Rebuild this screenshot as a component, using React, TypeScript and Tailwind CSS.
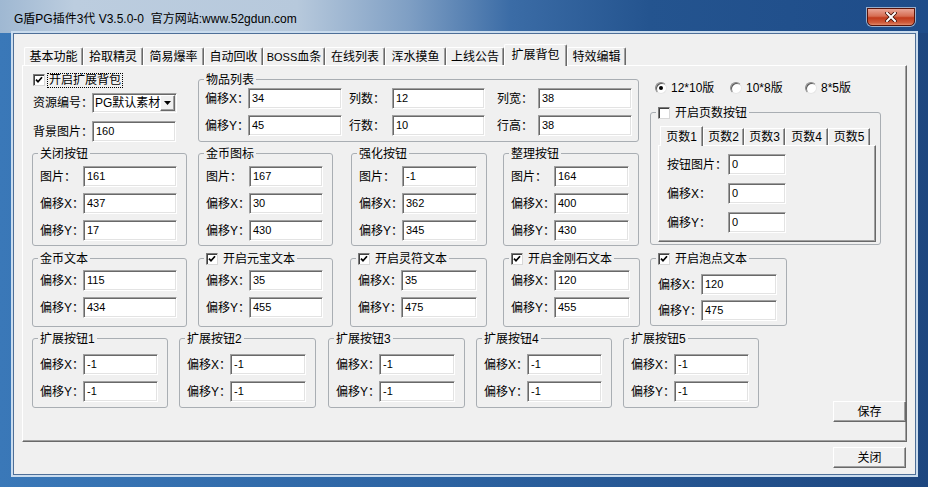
import React from 'react';

const sunken =
  'bg-white border border-t-[#a0a0a0] border-l-[#a0a0a0] border-r-white border-b-white shadow-[inset_1px_1px_0_#696969,inset_-1px_-1px_0_#e3e3e3]';
const raised =
  'bg-[#f0f0f0] border border-t-white border-l-white border-r-[#696969] border-b-[#696969] shadow-[inset_-1px_-1px_0_#a0a0a0]';

const Edit = ({ v, className = '' }: { v: string; className?: string }) => (
  <div className={`h-[21px] shrink-0 pl-[3px] pt-[3px] text-[11px] leading-[13px] ${sunken} ${className}`}>{v}</div>
);

const Check = ({ on = true }: { on?: boolean }) => (
  <span className="flex h-[12px] w-[12px] shrink-0 items-center justify-center border border-t-[#7a7a7a] border-l-[#7a7a7a] border-r-[#d8d8d8] border-b-[#d8d8d8] bg-white shadow-[inset_1px_1px_0_#404040]">
    {on && (
      <svg width="8" height="8" viewBox="0 0 8 8">
        <path d="M1 3.6 L3 5.8 L7 1.2" stroke="#000" strokeWidth="1.7" fill="none" />
      </svg>
    )}
  </span>
);

const Radio = ({ on = false }: { on?: boolean }) => (
  <span className="flex h-[12px] w-[12px] shrink-0 items-center justify-center rounded-full border border-t-[#8a8a8a] border-l-[#8a8a8a] border-r-[#e6e6e6] border-b-[#e6e6e6] bg-white shadow-[inset_1px_1px_0_#5a5a5a]">
    {on && <span className="h-[4px] w-[4px] rounded-full bg-black" />}
  </span>
);

const Group = ({
  title,
  className = '',
  children,
}: {
  title: React.ReactNode;
  className?: string;
  children?: React.ReactNode;
}) => (
  <div className={`relative shrink-0 rounded-[3px] border border-[#a9aeb3] ${className}`}>
    <div className="absolute -top-[8px] left-[5px] flex h-[15px] items-center gap-[5px] whitespace-nowrap bg-[#f0f0f0] px-[2px]">
      {title}
    </div>
    {children}
  </div>
);

const CheckTitle = ({ label, on = true }: { label: string; on?: boolean }) => (
  <>
    <Check on={on} />
    <span>{label}</span>
  </>
);

// label + edit pairs stacked inside a group
const Fields = ({ rows, className }: { rows: [string, string][]; className: string }) => (
  <div className={`flex flex-col pl-[7px] pr-[9px] ${className}`}>
    {rows.map(([label, v]) => (
      <div key={label} className="flex items-center">
        <span className="w-[43px] shrink-0 whitespace-nowrap">{label}</span>
        <Edit v={v} className="min-w-0 flex-1" />
      </div>
    ))}
  </div>
);

const TABS: [string, string][] = [
  ['基本功能', 'w-[59px]'],
  ['拾取精灵', 'w-[60px]'],
  ['简易爆率', 'w-[61px]'],
  ['自动回收', 'w-[59px]'],
  ['BOSS血条', 'w-[62px]'],
  ['在线列表', 'w-[60px]'],
  ['浑水摸鱼', 'w-[61px]'],
  ['上线公告', 'w-[58px]'],
  ['扩展背包', 'w-[63px]'],
  ['特效编辑', 'w-[59px]'],
];

const PAGE_TABS: [string, string][] = [
  ['页数1', 'w-[43px]'],
  ['页数2', 'w-[41px]'],
  ['页数3', 'w-[41px]'],
  ['页数4', 'w-[43px]'],
  ['页数5', 'w-[42px]'],
];

const XY = (x: string, y: string): [string, string][] => [
  ['偏移X：', x],
  ['偏移Y：', y],
];

export default function App() {
  return (
    <div className="relative flex h-[487px] w-[928px] flex-col overflow-hidden bg-[linear-gradient(90deg,#3a78b8_0%,#2d64a3_45%,#1d467f_100%)] font-['Liberation_Sans','Noto_Sans_CJK_SC',sans-serif] text-[12px] leading-[14px] text-black">
      {/* title bar */}
      <div className="flex h-[33px] shrink-0 items-start bg-[linear-gradient(90deg,#9fb8d2_0%,#bccddf_8%,#b7c9dc_32%,#7f9fc4_44%,#3b6ca6_55%,#24548f_70%,#1e4c89_100%)] pl-[14px]">
        <span className="mt-[12px] whitespace-pre">G盾PG插件3代 V3.5.0-0  官方网站:www.52gdun.com</span>
        <div className="ml-auto mr-[13px] mt-[8px] flex h-[18px] w-[48px] items-center justify-center rounded-b-[5px] border border-[#5a1409] bg-[linear-gradient(180deg,#e9a596_0%,#d66d52_45%,#c13b1c_55%,#cf5c3c_85%,#e08a6c_100%)] shadow-[0_0_0_1px_rgba(255,255,255,0.55)]">
          <svg width="12" height="10" viewBox="0 0 12 10">
            <path d="M2 1 L10 9 M10 1 L2 9" stroke="#3a0c04" strokeWidth="3.6" strokeLinecap="square" />
            <path d="M2 1 L10 9 M10 1 L2 9" stroke="#fff" strokeWidth="2" strokeLinecap="square" />
          </svg>
        </div>
      </div>

      {/* client area */}
      <div className="mb-[12px] ml-[13px] mr-[12px] flex flex-1 flex-col border border-[#4e6f98] bg-[#f0f0f0] px-[8px] pt-[10px] shadow-[0_0_0_2px_#cadcee]">
        {/* tab strip */}
        <div className="flex h-[21px] items-end pl-[2px]">
          {TABS.map(([label, w]) =>
            label === '扩展背包' ? (
              <div
                key={label}
                className={`${w} relative z-10 -mb-[1px] flex h-[22px] items-center justify-center rounded-t-[2px] border-l border-r border-t border-l-white border-r-[#696969] border-t-white bg-[#f0f0f0] pb-[1px] shadow-[inset_-1px_0_0_#a0a0a0]`}
              >
                {label}
              </div>
            ) : (
              <div
                key={label}
                className={`${w} flex h-[18px] items-center justify-center rounded-t-[2px] border-l border-r border-t border-l-white border-r-[#696969] border-t-white shadow-[inset_-1px_0_0_#a0a0a0]`}
              >
                {label === 'BOSS血条' ? (
                  <span>
                    <span className="text-[11px]">BOSS</span>血条
                  </span>
                ) : (
                  label
                )}
              </div>
            )
          )}
        </div>

        {/* tab panel */}
        <div className="flex h-[377px] shrink-0 flex-col border border-b-[#696969] border-l-white border-r-[#696969] border-t-white pl-[9px] shadow-[inset_-1px_-1px_0_#a0a0a0]">
          <div className="flex items-start">
            <div className="flex w-[607px] flex-col">
              <div className="flex items-start">
                <div className="flex w-[166px] flex-col">
                  <div className="mt-[6px] flex h-[16px] items-center pl-[1px]">
                    <Check />
                    <span className="ml-[2px] border border-dotted border-black px-[1px] leading-[13px]">开启扩展背包</span>
                  </div>
                  <div className="mt-[5px] flex h-[20px] items-center pl-[1px]">
                    <span className="w-[59px] shrink-0 whitespace-nowrap">资源编号：</span>
                    <div className={`flex h-[20px] w-[85px] items-start ${sunken}`}>
                      <span className="flex-1 whitespace-nowrap pl-[2px] pt-[2px]">PG默认素材</span>
                      <span className={`mr-[1px] mt-[1px] flex h-[16px] w-[16px] items-center justify-center ${raised}`}>
                        <svg width="7" height="4" viewBox="0 0 7 4">
                          <path d="M0 0 H7 L3.5 4 Z" fill="#000" />
                        </svg>
                      </span>
                    </div>
                  </div>
                  <div className="mt-[8px] flex items-center pl-[1px]">
                    <span className="w-[59px] shrink-0 whitespace-nowrap">背景图片：</span>
                    <Edit v="160" className="w-[84px]" />
                  </div>
                </div>

                <Group title="物品列表" className="mt-[13px] h-[63px] w-[441px]">
                  <div className="flex flex-col gap-[6px] pl-[6px] pt-[8px]">
                    {[
                      ['偏移X：', '34', '列数：', '12', '列宽：', '38'],
                      ['偏移Y：', '45', '行数：', '10', '行高：', '38'],
                    ].map((r) => (
                      <div key={r[0]} className="flex items-center">
                        <span className="w-[43px] shrink-0 whitespace-nowrap">{r[0]}</span>
                        <Edit v={r[1]} className="w-[94px]" />
                        <span className="ml-[7px] w-[43px] shrink-0">{r[2]}</span>
                        <Edit v={r[3]} className="w-[93px]" />
                        <span className="ml-[12px] w-[41px] shrink-0">{r[4]}</span>
                        <Edit v={r[5]} className="w-[94px]" />
                      </div>
                    ))}
                  </div>
                </Group>
              </div>

              <div className="mt-[11px] flex items-start">
                <Group title="关闭按钮" className="h-[93px] w-[155px]">
                  <Fields className="gap-[6px] pt-[12px]" rows={[['图片：', '161'], ...XY('437', '17')]} />
                </Group>
                <Group title="金币图标" className="ml-[11px] h-[93px] w-[135px]">
                  <Fields className="gap-[6px] pt-[12px]" rows={[['图片：', '167'], ...XY('30', '430')]} />
                </Group>
                <Group title="强化按钮" className="ml-[18px] h-[93px] w-[136px]">
                  <Fields className="gap-[6px] pt-[12px]" rows={[['图片：', '-1'], ...XY('362', '345')]} />
                </Group>
                <Group title="整理按钮" className="ml-[16px] h-[93px] w-[136px]">
                  <Fields className="gap-[6px] pt-[12px]" rows={[['图片：', '164'], ...XY('400', '430')]} />
                </Group>
              </div>
            </div>

            {/* right column */}
            <div className="ml-[11px] flex w-[231px] flex-col">
              <div className="mt-[15px] flex h-[14px] items-center pl-[5px]">
                <div className="flex w-[75px] items-center gap-[4px]">
                  <Radio on />
                  <span>12*10版</span>
                </div>
                <div className="flex w-[75px] items-center gap-[4px]">
                  <Radio />
                  <span>10*8版</span>
                </div>
                <div className="flex items-center gap-[4px]">
                  <Radio />
                  <span>8*5版</span>
                </div>
              </div>
              <Group title={<CheckTitle label="开启页数按钮" on={false} />} className="mt-[17px] h-[133px] w-[231px]">
                <div className="ml-[7px] mt-[13px] flex h-[19px] items-end pl-[2px]">
                  {PAGE_TABS.map(([label, w], i) =>
                    i === 0 ? (
                      <div
                        key={label}
                        className={`${w} relative z-10 -mb-[1px] flex h-[20px] items-center justify-center border-l border-r border-t border-l-white border-r-[#696969] border-t-white bg-[#f0f0f0] shadow-[inset_-1px_0_0_#a0a0a0]`}
                      >
                        {label}
                      </div>
                    ) : (
                      <div
                        key={label}
                        className={`${w} flex h-[17px] items-center justify-center border-l border-r border-t border-l-white border-r-[#696969] border-t-white shadow-[inset_-1px_0_0_#a0a0a0]`}
                      >
                        {label}
                      </div>
                    )
                  )}
                </div>
                <div className="ml-[7px] flex h-[97px] w-[218px] flex-col gap-[8px] border border-b-[#696969] border-l-white border-r-[#696969] border-t-white pl-[8px] pt-[8px] shadow-[inset_-1px_-1px_0_#a0a0a0]">
                  {[
                    ['按钮图片：', '0'],
                    ['偏移X：', '0'],
                    ['偏移Y：', '0'],
                  ].map(([label, v]) => (
                    <div key={label} className="flex items-center">
                      <span className="w-[61px] shrink-0 whitespace-nowrap">{label}</span>
                      <Edit v={v} className="w-[58px]" />
                    </div>
                  ))}
                </div>
              </Group>
            </div>
          </div>

          {/* text offsets */}
          <div className="mt-[12px] flex items-start">
            <Group title="金币文本" className="h-[69px] w-[155px]">
              <Fields className="gap-[6px] pt-[11px]" rows={XY('115', '434')} />
            </Group>
            <Group title={<CheckTitle label="开启元宝文本" />} className="ml-[11px] h-[69px] w-[135px]">
              <Fields className="gap-[6px] pt-[11px]" rows={XY('35', '455')} />
            </Group>
            <Group title={<CheckTitle label="开启灵符文本" />} className="ml-[17px] h-[69px] w-[137px]">
              <Fields className="gap-[6px] pt-[11px]" rows={XY('35', '475')} />
            </Group>
            <Group title={<CheckTitle label="开启金刚石文本" />} className="ml-[16px] h-[69px] w-[137px]">
              <Fields className="gap-[6px] pt-[11px]" rows={XY('120', '455')} />
            </Group>
            <Group title={<CheckTitle label="开启泡点文本" />} className="ml-[10px] h-[68px] w-[137px]">
              <Fields className="gap-[5px] pt-[15px]" rows={XY('120', '475')} />
            </Group>
          </div>

          {/* extension buttons */}
          <div className="mt-[11px] flex items-start">
            <Group title="扩展按钮1" className="h-[70px] w-[136px]">
              <Fields className="gap-[6px] pt-[15px]" rows={XY('-1', '-1')} />
            </Group>
            <Group title="扩展按钮2" className="ml-[11px] h-[70px] w-[137px]">
              <Fields className="gap-[6px] pt-[15px]" rows={XY('-1', '-1')} />
            </Group>
            <Group title="扩展按钮3" className="ml-[12px] h-[70px] w-[137px]">
              <Fields className="gap-[6px] pt-[15px]" rows={XY('-1', '-1')} />
            </Group>
            <Group title="扩展按钮4" className="ml-[11px] h-[70px] w-[136px]">
              <Fields className="gap-[6px] pt-[15px]" rows={XY('-1', '-1')} />
            </Group>
            <Group title="扩展按钮5" className="ml-[11px] h-[70px] w-[136px]">
              <Fields className="gap-[6px] pt-[15px]" rows={XY('-1', '-1')} />
            </Group>
            <button className={`ml-auto mt-[63px] flex h-[21px] w-[73px] items-center justify-center ${raised}`}>保存</button>
          </div>
        </div>

        <button className={`mr-[1px] mt-[5px] flex h-[21px] w-[73px] items-center justify-center self-end ${raised}`}>关闭</button>
      </div>
    </div>
  );
}
